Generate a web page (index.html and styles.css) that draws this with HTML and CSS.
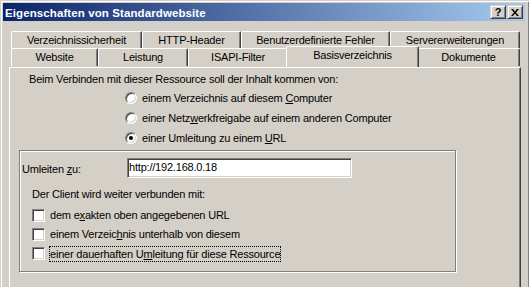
FILE: index.html
```html
<!DOCTYPE html>
<html lang="de">

<head>
    <meta charset="UTF-8">
    <title>Eigenschaften von Standardwebsite</title>
    <link rel="stylesheet" href="styles.css">
</head>

<body>
    <div class="window">
        <div class="titlebar">
            <span class="title">Eigenschaften von Standardwebsite</span>
            <div class="caption-buttons">
                <span class="cap-btn help">?</span>
                <span class="cap-btn close">
                    <svg width="8" height="7" viewBox="0 0 8 7">
                        <path d="M0 0h2l2 2.5L6 0h2L5 3.5 8 7H6L4 4.5 2 7H0l3-3.5z" fill="#000" />
                    </svg>
                </span>
            </div>
        </div>

        <div class="tabs">
            <div class="tab-row back">
                <div class="tab tab-security">Verzeichnissicherheit</div>
                <div class="tab tab-http">HTTP-Header</div>
                <div class="tab tab-errors">Benutzerdefinierte Fehler</div>
                <div class="tab tab-ext">Servererweiterungen</div>
            </div>
            <div class="tab-row front">
                <div class="tab tab-website">Website</div>
                <div class="tab tab-perf">Leistung</div>
                <div class="tab tab-isapi">ISAPI-Filter</div>
                <div class="tab tab-home selected">Basisverzeichnis</div>
                <div class="tab tab-docs">Dokumente</div>
            </div>
        </div>

        <main class="panel">
            <p class="intro">Beim Verbinden mit dieser Ressource soll der Inhalt kommen von:</p>

            <div class="radio-list">
                <div class="option">
                    <span class="radio"></span>
                    <span class="label">einem Verzeichnis auf diesem <u>C</u>omputer</span>
                </div>
                <div class="option">
                    <span class="radio"></span>
                    <span class="label">einer Netz<u>w</u>erkfreigabe auf einem anderen Computer</span>
                </div>
                <div class="option">
                    <span class="radio checked"></span>
                    <span class="label">einer Umleitung zu einem <u>U</u>RL</span>
                </div>
            </div>

            <div class="groupbox">
                <div class="redirect-row">
                    <span class="redirect-label">Umleiten <u>z</u>u:</span>
                    <span class="textbox">http://192.168.0.18</span>
                </div>
                <p class="client-text">Der Client wird weiter verbunden mit:</p>
                <div class="check-list">
                    <div class="option check">
                        <span class="checkbox"></span>
                        <span class="label">dem e<u>x</u>akten oben angegebenen URL</span>
                    </div>
                    <div class="option check">
                        <span class="checkbox"></span>
                        <span class="label">einem Verzeic<u>h</u>nis unterhalb von diesem</span>
                    </div>
                    <div class="option check">
                        <span class="checkbox"></span>
                        <span class="label focused">einer dauerhaften U<u>m</u>leitung für diese Ressource</span>
                    </div>
                </div>
            </div>
        </main>
    </div>
</body>

</html>
```

FILE: styles.css
```css
/* Windows 2000 style property dialog */
body {
    margin: 0;
    padding: 0;
    background-color: #d4d0c8;
    font-family: "Liberation Sans", Arial, sans-serif;
    font-size: 11px;
    letter-spacing: -0.2px;
    color: #000;
}

.window {
    width: 529px;
    height: 287px;
    box-sizing: border-box;
    overflow: hidden;
    padding: 3px 4px 0 3px;
    background-color: #d4d0c8;
    box-shadow: inset 0 1px 0 #d4d0c8, inset 1px 0 0 #d4d0c8, inset 0 2px 0 #fff, inset 2px 0 0 #fff, inset -1px 0 0 #808080;
}

/* Title bar */
.titlebar {
    height: 18px;
    display: flex;
    align-items: center;
    justify-content: space-between;
    background: linear-gradient(to right, #0a246a, #a6caf0);
}

.title {
    padding-left: 2px;
    padding-top: 1px;
    color: #fff;
    font-weight: bold;
    font-size: 11.5px;
    letter-spacing: 0.1px;
}

.caption-buttons {
    display: flex;
    gap: 1px;
    margin-right: 2px;
}

.cap-btn {
    width: 16px;
    height: 14px;
    box-sizing: border-box;
    display: flex;
    align-items: center;
    justify-content: center;
    background-color: #d4d0c8;
    border: 1px solid;
    border-color: #d4d0c8 #404040 #404040 #d4d0c8;
    box-shadow: inset 1px 1px 0 #fff, inset -1px -1px 0 #808080;
}

.help {
    font-weight: bold;
    font-size: 11px;
    letter-spacing: 0;
    line-height: 12px;
}

/* Tabs */
.tabs {
    margin-top: 10px;
    margin-left: 8px;
}

.tab-row {
    display: flex;
}

.tab {
    box-sizing: border-box;
    text-align: center;
    white-space: nowrap;
    background-color: #d4d0c8;
    border-top: 1px solid #fff;
    border-left: 1px solid #fff;
    border-right: 1px solid #404040;
    box-shadow: inset -1px 0 0 #808080;
    border-top-left-radius: 2px;
    border-top-right-radius: 2px;
}

.back .tab {
    height: 17px;
    line-height: 16px;
}

.front .tab {
    height: 18px;
    line-height: 17px;
}

.tab-security { width: 131px; }
.tab-http { width: 99px; }
.tab-errors { width: 149px; }
.tab-ext { width: 130px; }

.tab-website { width: 87px; }
.tab-perf { width: 90px; }
.tab-isapi { width: 100px; }
.tab-home { width: 129px; }
.tab-docs { width: 103px; }

.front .tab.selected {
    width: 133px;
    height: 21px;
    margin: -2px -2px 0 -2px;
    padding-top: 0;
    z-index: 1;
}

/* Tab panel */
.panel {
    width: 512px;
    height: 230px;
    box-sizing: border-box;
    margin-left: 6px;
    padding: 5px 0 0 0;
    border-top: 1px solid #fff;
    border-left: 1px solid #fff;
    border-right: 1px solid #404040;
    box-shadow: inset -1px 0 0 #808080;
}

.intro {
    margin: 0 0 0 19px;
    line-height: 13px;
}

.radio-list {
    margin: 2px 0 0 115px;
}

.option {
    height: 20px;
    display: flex;
    align-items: center;
}

.label {
    margin-left: 5px;
    line-height: 13px;
    white-space: nowrap;
}

.radio {
    width: 12px;
    height: 12px;
    box-sizing: border-box;
    border-radius: 50%;
    border: 1px solid;
    border-color: #808080 #fff #fff #808080;
    box-shadow: inset 1px 1px 0 #404040, inset -1px -1px 0 #d4d0c8;
    background-color: #fff;
    display: flex;
    align-items: center;
    justify-content: center;
}

.radio.checked::after {
    content: "";
    width: 4px;
    height: 4px;
    border-radius: 50%;
    background-color: #000;
}

/* Redirect group */
.groupbox {
    width: 437px;
    height: 122px;
    box-sizing: border-box;
    margin: 2px 0 0 9px;
    padding: 7px 0 0 2px;
    border: 1px solid #808080;
    box-shadow: inset 1px 1px 0 #fff, 1px 1px 0 #fff;
}

.redirect-row {
    display: flex;
    align-items: center;
    height: 20px;
}

.redirect-label {
    width: 105px;
    margin-top: 2px;
}

.textbox {
    width: 225px;
    height: 20px;
    box-sizing: border-box;
    padding-left: 1px;
    line-height: 16px;
    background-color: #fff;
    border: 1px solid;
    border-color: #808080 #fff #fff #808080;
    box-shadow: inset 1px 1px 0 #404040, inset -1px -1px 0 #d4d0c8;
}

.client-text {
    margin: 10px 0 0 10px;
    line-height: 13px;
}

.check-list {
    margin: 5px 0 0 10px;
}

.option.check {
    height: 19px;
}

.checkbox {
    width: 13px;
    height: 13px;
    box-sizing: border-box;
    background-color: #fff;
    border: 1px solid;
    border-color: #808080 #fff #fff #808080;
    box-shadow: inset 1px 1px 0 #404040, inset -1px -1px 0 #d4d0c8;
}

.check .label {
    margin-left: 5px;
}

.check .label.focused {
    margin-left: 4px;
    padding: 1px 0 0 0;
    border: 1px dotted #000;
    line-height: 13px;
}
```
